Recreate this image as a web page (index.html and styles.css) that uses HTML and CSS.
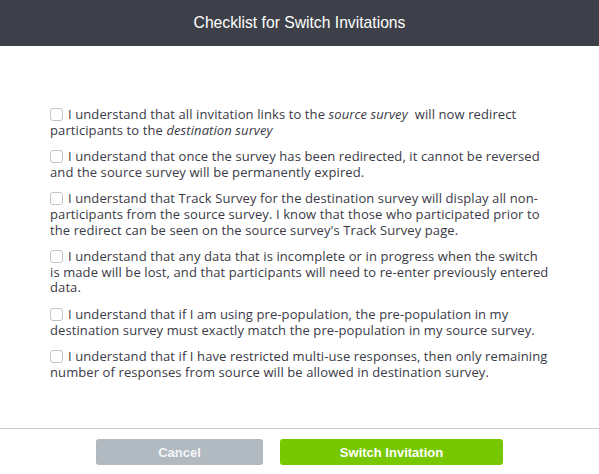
FILE: index.html
```html
<!DOCTYPE html>
<html lang="en">
<head>
<meta charset="utf-8">
<title>Checklist for Switch Invitations</title>
<link rel="stylesheet" href="styles.css">
</head>
<body>
<div class="modal">
  <header class="modal-header">
    <h1 class="modal-title">Checklist for Switch Invitations</h1>
  </header>
  <main class="modal-body">
    <ul class="checklist">
      <li class="check-item"><label><span class="box"></span>I understand that all invitation links to the <em>source survey</em>&nbsp; will now redirect<br>participants to the <em>destination survey</em></label></li>
      <li class="check-item"><label><span class="box"></span>I understand that once the survey has been redirected, it cannot be reversed<br>and the source survey will be permanently expired.</label></li>
      <li class="check-item"><label><span class="box"></span>I understand that Track Survey for the destination survey will display all non-<br>participants from the source survey. I know that those who participated prior to<br>the redirect can be seen on the source survey's Track Survey page.</label></li>
      <li class="check-item"><label><span class="box"></span>I understand that any data that is incomplete or in progress when the switch<br>is made will be lost, and that participants will need to re-enter previously entered<br>data.</label></li>
      <li class="check-item"><label><span class="box"></span>I understand that if I am using pre-population, the pre-population in my<br>destination survey must exactly match the pre-population in my source survey.</label></li>
      <li class="check-item"><label><span class="box"></span>I understand that if I have restricted multi-use responses, then only remaining<br>number of responses from source will be allowed in destination survey.</label></li>
    </ul>
  </main>
  <footer class="modal-footer">
    <button class="btn btn-cancel" type="button">Cancel</button>
    <button class="btn btn-primary" type="button">Switch Invitation</button>
  </footer>
</div>
</body>
</html>
```
FILE: styles.css
```css
* { box-sizing: border-box; }
html, body { margin: 0; padding: 0; background: #fff; }
body { font-family: "Open Sans", "Liberation Sans", sans-serif; }

.modal {
  height: 100vh;
  display: flex;
  flex-direction: column;
}

.modal-header {
  height: 46px;
  background: #3d4049;
  display: flex;
  align-items: center;
  justify-content: center;
}
.modal-title {
  margin: 0;
  color: #fff;
  font-family: "Liberation Sans", sans-serif;
  font-size: 15.7px;
  font-weight: normal;
}

.modal-body {
  flex: 1;
  padding: 61px 20px 0 50px;
}
.checklist {
  list-style: none;
  margin: 0;
  padding: 0;
}
.check-item {
  font-size: 13px;
  line-height: 15.6px;
  letter-spacing: 0.1px;
  color: #3a3a46;
  margin-bottom: 11px;
}
.check-item em { font-style: italic; }
.box {
  display: inline-block;
  width: 13px;
  height: 13px;
  border: 1px solid #c4c4c4;
  border-radius: 3px;
  background: #fff;
  vertical-align: -2px;
  margin-right: 5px;
}

.modal-footer {
  border-top: 1px solid #c9cdd1;
  padding: 10px 0 9px;
  display: flex;
  justify-content: center;
  gap: 17px;
}
.btn {
  height: 26px;
  border: none;
  border-radius: 3px;
  color: #fff;
  font-family: "Liberation Sans", sans-serif;
  font-size: 13px;
  font-weight: bold;
  padding: 0;
}
.btn-cancel { width: 167px; background: #b1b9c1; color: #f4f6f8; }
.btn-primary { width: 223px; background: #77c800; }
```
